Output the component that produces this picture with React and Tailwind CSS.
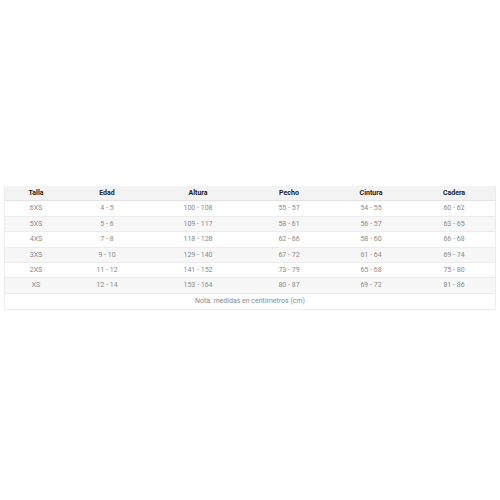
import React from "react";

const cols = [
  { h: "Talla", w: "w-[62px]" },
  { h: "Edad", w: "w-[80px]" },
  { h: "Altura", w: "w-[102px]" },
  { h: "Pecho", w: "w-[80px]" },
  { h: "Cintura", w: "w-[84px]" },
  { h: "Cadera", w: "flex-1" },
];

const rows = [
  ["6XS", "4 - 5", "100 - 108", "55 - 57", "54 - 55", "60 - 62"],
  ["5XS", "5 - 6", "109 - 117", "58 - 61", "56 - 57", "63 - 65"],
  ["4XS", "7 - 8", "118 - 128", "62 - 66", "58 - 60", "66 - 68"],
  ["3XS", "9 - 10", "129 - 140", "67 - 72", "61 - 64", "69 - 74"],
  ["2XS", "11 - 12", "141 - 152", "73 - 79", "65 - 68", "75 - 80"],
  ["XS", "12 - 14", "153 - 164", "80 - 87", "69 - 72", "81 - 86"],
];

export default function App() {
  return (
    <div
      className="w-[500px] h-[500px] bg-white pt-[186px] px-[4px]"
      style={{ fontFamily: "Roboto, 'Open Sans', Arial, sans-serif" }}
    >
      <div className="border border-[#ededed] border-t-0">
        <div className="flex h-[15.4px] items-center bg-[#f3f3f3] border-b border-[#e4e4e4]">
          {cols.map((c) => (
            <div
              key={c.h}
              className={`${c.w} text-center text-[7px] font-bold text-[#222]`}
            >
              {c.h}
            </div>
          ))}
        </div>
        {rows.map((r, i) => (
          <div
            key={r[0]}
            className={`flex h-[15.4px] items-center border-b border-[#ececec] ${
              i % 2 === 1 ? "bg-[#f7f7f7]" : "bg-white"
            }`}
          >
            {r.map((v, j) => (
              <div
                key={j}
                className={`${cols[j].w} text-center text-[7px] text-[#8a8a8a]`}
              >
                {v}
              </div>
            ))}
          </div>
        ))}
        <div className="flex h-[15.4px] items-center justify-center bg-white text-[7px] text-[#8a8a8a]">
          Nota: medidas en centímetros (cm)
        </div>
      </div>
    </div>
  );
}
